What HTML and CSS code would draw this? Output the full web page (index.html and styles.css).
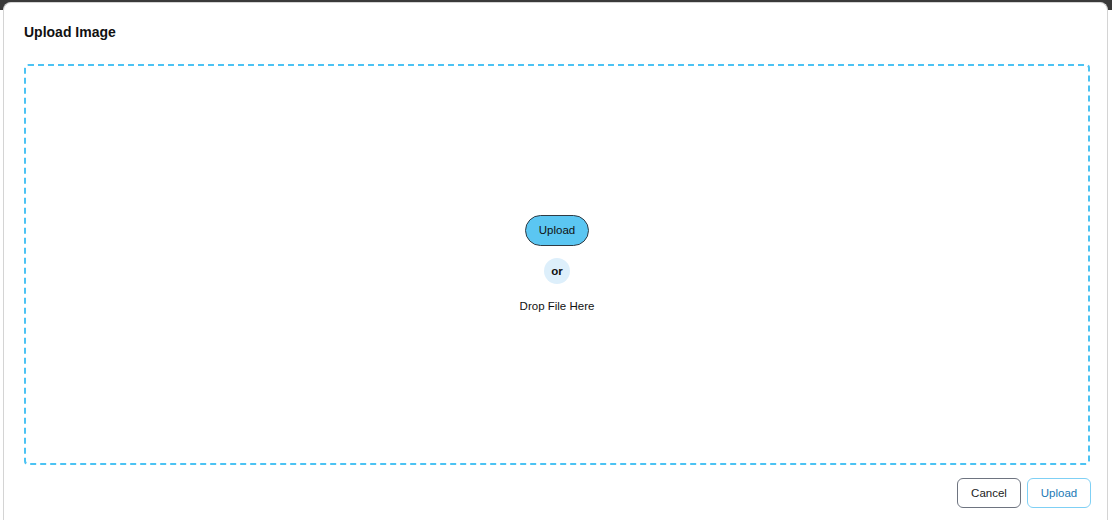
FILE: index.html
```html
<!DOCTYPE html>
<html>
<head>
<meta charset="utf-8">
<link rel="stylesheet" href="styles.css">
</head>
<body>
<div class="modal">
  <h2 class="title">Upload Image</h2>
  <div class="dropzone">
    <button class="btn-upload-main">Upload</button>
    <span class="or">or</span>
    <span class="drop-text">Drop File Here</span>
  </div>
  <div class="footer">
    <button class="btn btn-cancel">Cancel</button>
    <button class="btn btn-primary">Upload</button>
  </div>
</div>
</body>
</html>
```
FILE: styles.css
```css
html, body {
  margin: 0;
  height: 100%;
}
body {
  background: linear-gradient(#3a3a3a 0, #3a3a3a 10px, #ffffff 10px);
  font-family: "Liberation Sans", Arial, sans-serif;
  color: #111;
  overflow: hidden;
}
.modal {
  margin: 2px 4px 0 3px;
  height: 518px;
  background: #fff;
  border: 1px solid #d4d4d4;
  border-bottom: none;
  border-radius: 8px 8px 0 0;
  padding: 0 17px 0 20px;
  box-sizing: border-box;
  display: flex;
  flex-direction: column;
}
.title {
  margin: 0;
  padding: 21px 0 0 0;
  font-size: 14px;
  font-weight: bold;
  line-height: 16px;
  height: 40px;
  box-sizing: border-box;
}
.dropzone {
  margin-top: 21px;
  height: 401px;
  box-sizing: border-box;
  border: 2px dashed #4cc3f3;
  border-radius: 4px;
  display: flex;
  flex-direction: column;
  align-items: center;
  justify-content: center;
  padding-bottom: 2px;
}
.btn-upload-main {
  width: 64px;
  height: 31px;
  border-radius: 16px;
  background: #5bc6f2;
  border: 1px solid #2f3b44;
  font-family: "Liberation Sans", Arial, sans-serif;
  font-size: 11.5px;
  color: #111;
  padding: 0;
}
.or {
  margin-top: 12px;
  width: 26px;
  height: 26px;
  border-radius: 50%;
  background: #ddeffb;
  display: flex;
  align-items: center;
  justify-content: center;
  font-size: 11.5px;
  font-weight: bold;
}
.drop-text {
  margin-top: 15px;
  font-size: 11.5px;
  line-height: 14px;
}
.footer {
  display: flex;
  justify-content: flex-end;
  gap: 6px;
  margin-top: 13px;
  margin-right: -1px;
}
.btn {
  height: 30px;
  border-radius: 6px;
  background: #fff;
  font-family: "Liberation Sans", Arial, sans-serif;
  font-size: 11.5px;
  padding: 0;
}
.btn-cancel {
  width: 64px;
  border: 1px solid #6e7480;
  color: #222;
}
.btn-primary {
  width: 64px;
  border: 1px solid #7fd0f5;
  color: #1b79b5;
}
```
